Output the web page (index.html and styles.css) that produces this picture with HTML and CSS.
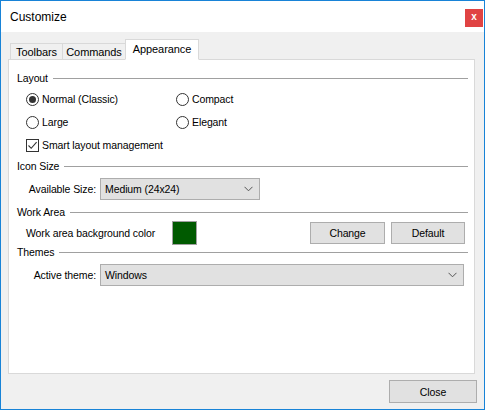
FILE: index.html
```html
<!DOCTYPE html>
<html>
<head>
<meta charset="utf-8">
<link rel="stylesheet" href="styles.css">
</head>
<body>
<div class="window">
  <div class="titlebar">
    <span class="title">Customize</span>
    <span class="close-x">x</span>
  </div>
  <div class="body">
    <div class="tabs">
      <div class="tab t1">Toolbars</div>
      <div class="tab t2">Commands</div>
      <div class="tab active t3">Appearance</div>
    </div>
    <div class="panel">
      <div class="group g1"><span>Layout</span><i class="rule"></i></div>
      <div class="radio-row r1">
        <label class="opt"><span class="radio on"></span>Normal (Classic)</label>
        <label class="opt"><span class="radio"></span>Compact</label>
      </div>
      <div class="radio-row r2">
        <label class="opt"><span class="radio"></span>Large</label>
        <label class="opt"><span class="radio"></span>Elegant</label>
      </div>
      <div class="radio-row r3">
        <label class="opt wide"><span class="check"><svg width="11" height="11" viewBox="0 0 11 11"><path d="M1.5 5.5 L4.2 8.3 L9.6 2.2" fill="none" stroke="#333" stroke-width="1.1"/></svg></span>Smart layout management</label>
      </div>
      <div class="group g2"><span>Icon Size</span><i class="rule"></i></div>
      <div class="field-row f1">
        <span class="flabel">Available Size:</span>
        <div class="combo short"><span>Medium (24x24)</span><svg width="9" height="6" viewBox="0 0 9 6"><path d="M0.5 0.8 L4.5 4.8 L8.5 0.8" fill="none" stroke="#555" stroke-width="1"/></svg></div>
      </div>
      <div class="group g3"><span>Work Area</span><i class="rule"></i></div>
      <div class="work-row">
        <span class="wlabel">Work area background color</span>
        <span class="swatch"></span>
        <span class="spacer"></span>
        <button class="btn change">Change</button>
        <button class="btn default">Default</button>
      </div>
      <div class="group g4"><span>Themes</span><i class="rule"></i></div>
      <div class="field-row f2">
        <span class="flabel">Active theme:</span>
        <div class="combo long"><span>Windows</span><svg width="9" height="6" viewBox="0 0 9 6"><path d="M0.5 0.8 L4.5 4.8 L8.5 0.8" fill="none" stroke="#555" stroke-width="1"/></svg></div>
      </div>
    </div>
    <div class="footer">
      <button class="btn closebtn">Close</button>
    </div>
  </div>
</div>
</body>
</html>
```

FILE: styles.css
```css
* { box-sizing: border-box; }
html, body { margin: 0; padding: 0; }
body {
  font-family: "Liberation Sans", Arial, sans-serif;
  font-size: 10.5px;
  letter-spacing: -0.1px;
  color: #000;
  background: #fff;
  white-space: nowrap;
}
.window {
  width: 485px;
  height: 410px;
  border: 1px solid #1883d7;
  display: flex;
  flex-direction: column;
}
.titlebar {
  height: 31px;
  background: #fff;
  display: flex;
  align-items: center;
  padding-left: 9px;
}
.title {
  font-size: 12px;
  letter-spacing: 0;
  flex: 1;
  margin-top: 1px;
}
.close-x {
  width: 18px;
  height: 18px;
  background: #e04343;
  color: #fff;
  font-weight: bold;
  font-size: 10px;
  line-height: 16px;
  text-align: center;
  margin-right: 1px;
  margin-top: 3px;
}
.body {
  flex: 1;
  background: #f0f0f0;
  padding: 7px 0 0 7px;
  display: flex;
  flex-direction: column;
}
.tabs {
  display: flex;
  align-items: flex-end;
  height: 21px;
  margin-left: 2px;
  margin-bottom: -1px;
  position: relative;
  z-index: 1;
}
.tab {
  height: 17px;
  border: 1px solid #d9d9d9;
  background: #f0f0f0;
  display: flex;
  align-items: center;
  justify-content: center;
  padding-top: 1px;
  font-size: 11px;
}
.t1 { width: 53px; }
.t2 { width: 64px; margin-left: -1px; }
.t3 { width: 74px; margin-left: -1px; }
.tab.active {
  height: 21px;
  background: #fff;
  border-bottom-color: #fff;
  padding-top: 0;
  padding-bottom: 2px;
}
.panel {
  width: 467px;
  height: 315px;
  background: #fff;
  border: 1px solid #d9d9d9;
  padding: 0 6px 0 8px;
}
.group {
  display: flex;
  align-items: center;
  height: 14px;
}
.group .rule {
  flex: 1;
  border-top: 1px solid #a0a0a0;
  margin-left: 5px;
  margin-top: 1px;
}
.g1 { margin-top: 11px; }
.g2 { margin-top: 6px; }
.g3 { margin-top: 5px; }
.g4 { margin-top: 0; }
.radio-row {
  display: flex;
  height: 16px;
  padding-left: 9px;
}
.r1 { margin-top: 6px; }
.r2 { margin-top: 7px; }
.r3 { margin-top: 7px; }
.opt {
  width: 150px;
  display: flex;
  align-items: center;
}
.opt.wide { width: auto; }
.radio {
  width: 13px;
  height: 13px;
  border: 1px solid #333;
  border-radius: 50%;
  background: #fff;
  margin-right: 3px;
  display: flex;
  align-items: center;
  justify-content: center;
}
.radio.on::after {
  content: "";
  width: 7px;
  height: 7px;
  border-radius: 50%;
  background: #333;
}
.check {
  width: 13px;
  height: 13px;
  border: 1px solid #333;
  background: #fff;
  margin-right: 3px;
  display: flex;
  align-items: center;
  justify-content: center;
}
.check svg { display: block; }
.field-row {
  display: flex;
  align-items: center;
  padding-left: 9px;
  height: 22px;
}
.f1 { margin-top: 5px; }
.f2 { margin-top: 5px; }
.flabel {
  width: 70px;
  text-align: right;
  margin-right: 4px;
}
.combo {
  height: 22px;
  background: #e1e1e1;
  border: 1px solid #adadad;
  display: flex;
  align-items: center;
  padding: 0 6px 0 4px;
}
.combo span { flex: 1; }
.combo svg { display: block; }
.combo.short { width: 160px; }
.combo.long { width: 364px; }
.work-row {
  display: flex;
  align-items: center;
  height: 24px;
  margin-top: 2px;
  padding-left: 9px;
}
.wlabel { width: 146px; }
.swatch {
  width: 25px;
  height: 24px;
  background: #005a00;
  border: 1px solid #a0a0a0;
}
.spacer { flex: 1; }
.btn {
  font-family: "Liberation Sans", Arial, sans-serif;
  font-size: 10.5px;
  letter-spacing: -0.1px;
  color: #000;
  background: #e1e1e1;
  border: 1px solid #adadad;
  height: 22px;
  padding: 0;
}
.change { width: 75px; }
.default { width: 74px; margin-left: 6px; margin-right: 3px; }
.footer {
  display: flex;
  justify-content: flex-end;
  padding-top: 6px;
  padding-right: 7px;
}
.closebtn { width: 88px; height: 23px; }
```
